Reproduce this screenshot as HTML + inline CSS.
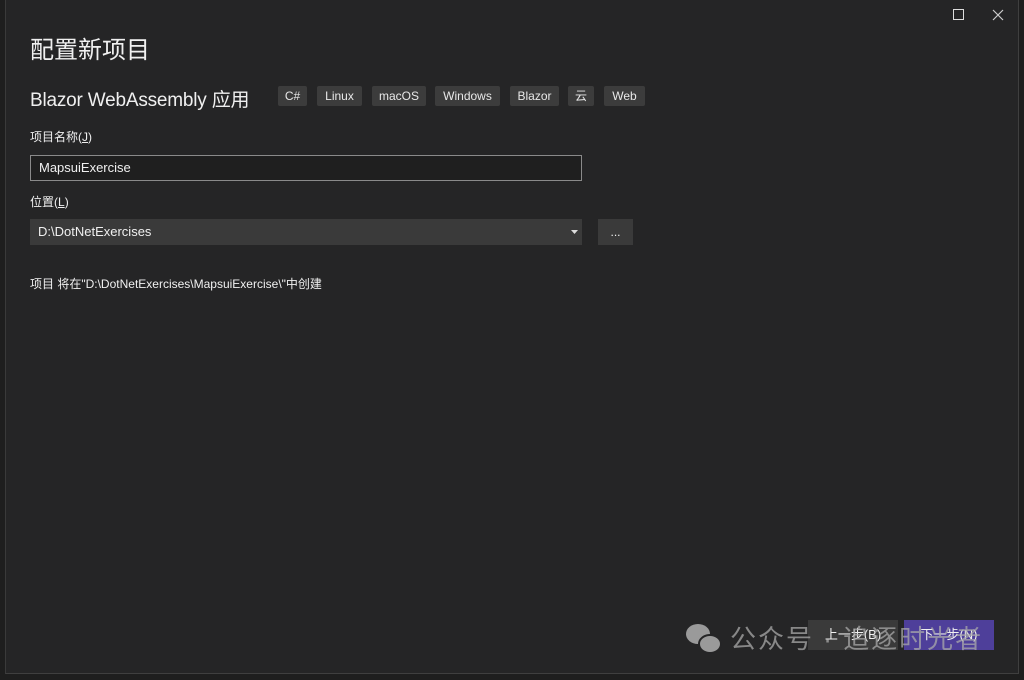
<!DOCTYPE html>
<html><head><meta charset="utf-8"><style>
body{margin:0;width:1024px;height:680px;background:#1e1e1e;position:relative;overflow:hidden;font-family:"Liberation Sans","Noto Sans CJK SC",sans-serif;color:#f0f0f0}
.win{position:absolute;left:5px;top:0;width:1012px;height:673px;background:#252526;border-right:1px solid #3f3f3f;border-bottom:1px solid #3f3f3f;border-left:1px solid #3a3a3a}
.a{position:absolute;white-space:nowrap}
.tag{position:absolute;top:86px;height:20px;background:#3c3c3c;border-radius:2px;font-size:12px;line-height:20px;text-align:center;color:#e8e8e8}
</style></head><body>
<div class="win"></div>
<div class="a" style="left:953px;top:9px;width:9px;height:9px;border:1px solid #ddd"></div>
<svg class="a" style="left:992px;top:9px" width="12" height="12"><path d="M1 1L11 11M11 1L1 11" stroke="#ccc" stroke-width="1.2"/></svg>
<div class="a" style="left:30px;top:30px;font-size:24px">配置新项目</div>
<div class="a" style="left:30px;top:85px;font-size:19px;letter-spacing:-0.2px">Blazor WebAssembly 应用</div>
<div class="tag" style="left:278px;width:29px">C#</div>
<div class="tag" style="left:317px;width:45px">Linux</div>
<div class="tag" style="left:372px;width:54px">macOS</div>
<div class="tag" style="left:435px;width:65px">Windows</div>
<div class="tag" style="left:510px;width:49px">Blazor</div>
<div class="tag" style="left:568px;width:26px">云</div>
<div class="tag" style="left:604px;width:41px">Web</div>
<div class="a" style="left:30px;top:128px;font-size:12px">项目名称(<u>J</u>)</div>
<div class="a" style="left:30px;top:155px;width:550px;height:24px;border:1px solid #8a8a8a;background:#1f1f1f;font-size:13px;line-height:24px;box-sizing:content-box"><span style="padding-left:8px">MapsuiExercise</span></div>
<div class="a" style="left:30px;top:193px;font-size:12px">位置(<u>L</u>)</div>
<div class="a" style="left:30px;top:219px;width:552px;height:26px;background:#3a3a3a;font-size:13px;line-height:26px"><span style="padding-left:8px">D:\DotNetExercises</span></div>
<svg class="a" style="left:571px;top:230px" width="8" height="5"><path d="M0 0H7L3.5 4Z" fill="#ddd"/></svg>
<div class="a" style="left:598px;top:219px;width:35px;height:26px;background:#3a3a3a;font-size:12px;line-height:26px;text-align:center">...</div>
<div class="a" style="left:30px;top:275px;font-size:12px">项目 将在"D:\DotNetExercises\MapsuiExercise\"中创建</div>
<div class="a" style="left:808px;top:620px;width:90px;height:30px;background:#3a3a3a;font-size:13px;line-height:30px;text-align:center">上一步(B)</div>
<div class="a" style="left:904px;top:620px;width:90px;height:30px;background:#4e3f9a;font-size:13px;line-height:30px;text-align:center">下一步(N)</div>
<svg class="a" style="left:683px;top:620px" width="40" height="36"><ellipse cx="15" cy="14" rx="12" ry="10" fill="#9a9a9a"/><ellipse cx="27" cy="24" rx="11" ry="9" fill="#9a9a9a" stroke="#252526" stroke-width="2"/></svg>
<div class="a" style="left:730px;top:619px;font-size:26px;letter-spacing:2px;color:rgba(170,170,170,.75)">公众号 · 追逐时光者</div>
</body></html>
